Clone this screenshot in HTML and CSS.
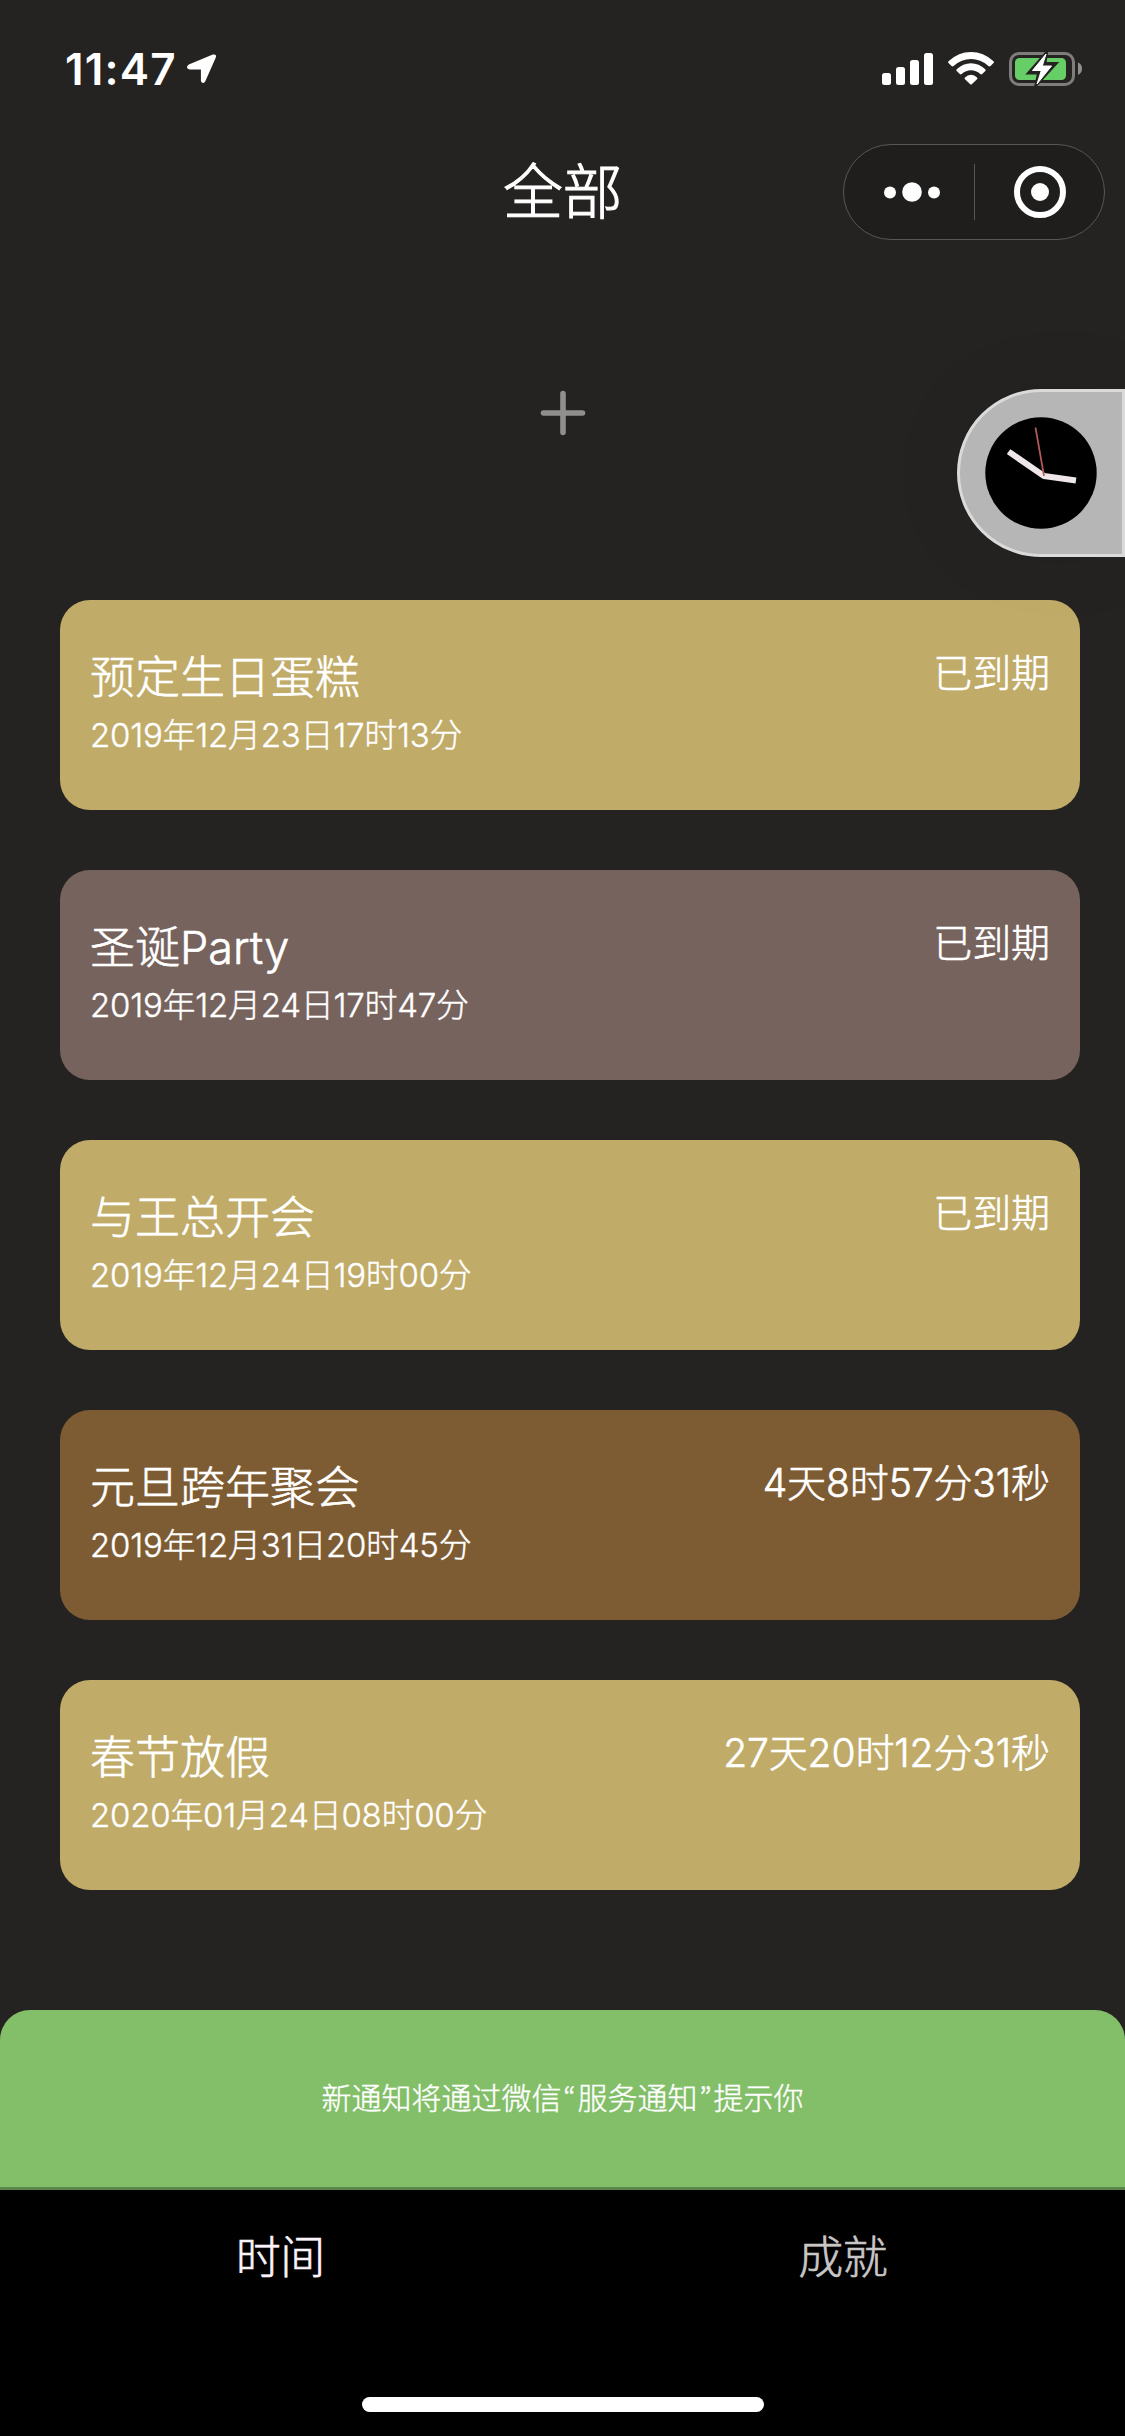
FILE: index.html
```html
<!DOCTYPE html>
<html lang="zh-CN">
<head>
<meta charset="utf-8">
<title>全部</title>
<link rel="stylesheet" href="styles.css">
</head>
<body>
<div class="app">
  <div class="statusbar">
    <div class="clock-time"><span class="time">11:47</span>
      <svg class="location" width="32" height="32" viewBox="0 0 32 32"><path d="M2.800 11.600L26.800 1.600Q31.200 .6 29.700 4.800L19.200 28.400Q16.500 31.800 14.900 27.900V16.500H3.400Q-1.200 14.800 2.800 11.600Z" fill="#fff"/></svg>
    </div>
    <svg class="indicators" width="202" height="36" viewBox="0 0 202 36">
      <g fill="#fff">
        <rect x="1" y="22" width="9" height="12" rx="2.500"/>
        <rect x="15" y="16" width="9" height="18" rx="2.500"/>
        <rect x="29" y="9" width="9" height="25" rx="2.500"/>
        <rect x="43" y="2" width="9" height="32" rx="2.500"/>
        <path d="M67.500 10.200Q77.500 1 90 1T112.500 10.200Q113.500 11.200 112.500 12.100L109.500 15Q108.500 15.900 107.400 15Q99.500 8.100 90 8.100T72.600 15Q71.500 15.900 70.500 15L67.500 12.100Q66.500 11.200 67.500 10.200Z"/>
        <path d="M75.700 18.300Q82 12.300 90 12.300T104.300 18.300Q105.200 19.200 104.300 20.100L101.200 23Q100.300 23.800 99.300 23Q95 19.300 90 19.300T80.700 23Q79.700 23.800 78.800 23L75.700 20.100Q74.800 19.200 75.700 18.300Z"/>
        <path d="M84 26.400Q86.500 23.700 90 23.700T96 26.400Q97 27.300 96 28.200L91 33.100Q90 34.100 89 33.100L84 28.200Q83 27.300 84 26.400Z"/>
      </g>
      <rect x="129.500" y="2.500" width="63" height="31" rx="8.500" fill="none" stroke="#7f7c7b" stroke-width="3"/>
      <path d="M197 11.500Q201 13 201 17.500T197 24Z" fill="#918f8e"/>
      <rect x="134" y="7" width="51" height="22" rx="4.500" fill="#67ce67"/>
      <path d="M166.300 0L146.500 22.500H157L154 36L176 12H164.500Z" fill="#252321" stroke="#252321" stroke-width="2"/>
      <path d="M165 3L151.500 19.500H160.300L156 33L170.500 15H161.300Z" fill="#fff" stroke="#fff" stroke-linejoin="round"/>
    </svg>
  </div>

  <header class="navbar">
    <h1 class="page-title">全部</h1>
    <div class="capsule">
      <svg class="more" width="60" height="24" viewBox="0 0 60 24" fill="#fff"><circle cx="8" cy="12.500" r="6"/><circle cx="30" cy="12" r="9.800"/><circle cx="52" cy="12.500" r="6"/></svg>
      <span class="capsule-divider"></span>
      <svg class="target" width="54" height="54" viewBox="0 0 54 54"><circle cx="27" cy="27" r="23" fill="none" stroke="#fff" stroke-width="6"/><circle cx="27" cy="27" r="9" fill="#fff"/></svg>
    </div>
  </header>

  <div class="add">
    <svg width="46" height="46" viewBox="0 0 46 46"><path d="M23 3.500V42.500M3.500 23H42.500" stroke="#908f8e" stroke-width="5.600" stroke-linecap="round"/></svg>
  </div>

  <main class="list">
    <article class="card gold">
      <div class="info"><h2 class="name">预定生日蛋糕</h2><p class="date">2019年12月23日17时13分</p></div>
      <div class="remain">已到期</div>
    </article>
    <article class="card mauve">
      <div class="info"><h2 class="name">圣诞Party</h2><p class="date">2019年12月24日17时47分</p></div>
      <div class="remain">已到期</div>
    </article>
    <article class="card gold">
      <div class="info"><h2 class="name">与王总开会</h2><p class="date">2019年12月24日19时00分</p></div>
      <div class="remain">已到期</div>
    </article>
    <article class="card brown">
      <div class="info"><h2 class="name">元旦跨年聚会</h2><p class="date">2019年12月31日20时45分</p></div>
      <div class="remain">4天8时57分31秒</div>
    </article>
    <article class="card gold">
      <div class="info"><h2 class="name">春节放假</h2><p class="date">2020年01月24日08时00分</p></div>
      <div class="remain">27天20时12分31秒</div>
    </article>
  </main>

  <div class="notice">新通知将通过微信<span class="quote">“</span>服务通知<span class="quote">”</span>提示你</div>

  <footer class="tabbar">
    <nav class="tabs"><span class="tab active">时间</span><span class="tab">成就</span></nav>
    <div class="home-indicator"></div>
  </footer>

  <div class="floating">
    <svg width="112" height="112" viewBox="0 0 112 112">
      <circle cx="56" cy="56" r="55.700" fill="#000"/>
      <path d="M26 36.300L59 59L88 63" fill="none" stroke="#eee6e8" stroke-width="6" stroke-linejoin="round" stroke-linecap="square"/>
      <path d="M50.500 10.500L59 59" stroke="#b75a58" stroke-width="1.700"/>
    </svg>
  </div>
</div>
</body>
</html>
```
FILE: styles.css
```css
* { box-sizing: border-box; }

body {
  margin: 0;
  background: #252321;
  color: #fff;
  font-family: Inter, "Noto Sans CJK SC", sans-serif;
  font-weight: 300;
}

h1, h2, p { margin: 0; font-weight: inherit; }
svg { display: block; flex: none; }

.app {
  position: relative;
  display: flex;
  flex-direction: column;
  width: 1125px;
  height: 2436px;
  overflow: hidden;
}

.statusbar {
  display: flex;
  justify-content: space-between;
  align-items: flex-start;
  height: 132px;
  padding: 51px 42px 0 65px;
}
.clock-time { display: flex; gap: 9px; }
.time {
  width: 112px;
  font-size: 44px;
  line-height: 36px;
  font-weight: 600;
  letter-spacing: 1.2px;
  white-space: nowrap;
}
.location { margin-top: 2px; }

.navbar {
  display: grid;
  grid-template-columns: 1fr auto 1fr;
  align-items: center;
  height: 120px;
  padding: 0 20px;
}
.page-title {
  grid-column: 2;
  font-size: 60px;
  line-height: 80px;
  letter-spacing: -0.5px;
  -webkit-text-stroke: 1px #fff;
}
.capsule {
  justify-self: end;
  display: flex;
  align-items: center;
  width: 262px;
  height: 96px;
  padding-left: 38px;
  border: 1px solid #585756;
  border-radius: 48px;
  background: #1f1e1d;
}
.capsule-divider {
  width: 1px;
  height: 56px;
  margin: 0 38px 0 32px;
  background: #585756;
}

.add {
  display: flex;
  justify-content: center;
  align-items: center;
  height: 321px;
}

.list {
  display: flex;
  flex-direction: column;
  gap: 60px;
  padding: 27px 45px 0 60px;
  height: 1437px;
}
.card {
  display: flex;
  justify-content: space-between;
  align-items: flex-start;
  height: 210px;
  flex: none;
  padding: 47px 30px 0;
  border-radius: 30px;
  -webkit-text-stroke: 0.6px #fff;
}
.gold { background: #c0ab68; }
.mauve { background: #77635d; }
.brown { background: #7e5c33; }
.name { font-size: 45px; line-height: 62px; }
.date { font-size: 33px; line-height: 52px; letter-spacing: -0.25px; -webkit-text-stroke-width: 0.4px; }
.remain { font-size: 39px; line-height: 52px; letter-spacing: -0.1px; }

.notice {
  height: 180px;
  border-bottom: 3px solid #5b8549;
  border-radius: 30px 30px 0 0;
  background: #83be69;
  font-size: 30px;
  line-height: 176px;
  text-align: center;
  -webkit-text-stroke: 0.4px #fff;
}
.quote {
  display: inline-block;
  width: 16px;
  font-family: "Noto Sans CJK KR", sans-serif;
  line-height: 1;
}

.tabbar {
  display: flex;
  flex-direction: column;
  justify-content: space-between;
  align-items: center;
  height: 246px;
  padding-bottom: 24px;
  background: #000;
}
.tabs { display: flex; width: 100%; }
.tab {
  flex: 1;
  padding: 35px 2px 0 0;
  font-size: 45px;
  line-height: 66px;
  letter-spacing: -0.5px;
  text-align: center;
  color: #c9c6c6;
  -webkit-text-stroke: 0.6px currentColor;
}
.tab.active { color: #fbf3fa; }
.home-indicator {
  width: 402px;
  height: 15px;
  border-radius: 8px;
  background: #fff;
}

.floating {
  position: absolute;
  top: 389px;
  right: 0;
  width: 168px;
  height: 168px;
  padding: 25px;
  border: 3px solid #dadada;
  border-radius: 84px 0 0 84px;
  background: #b6b6b6;
  box-shadow: 0 0 75px rgba(0, 0, 0, .08);
}
```
